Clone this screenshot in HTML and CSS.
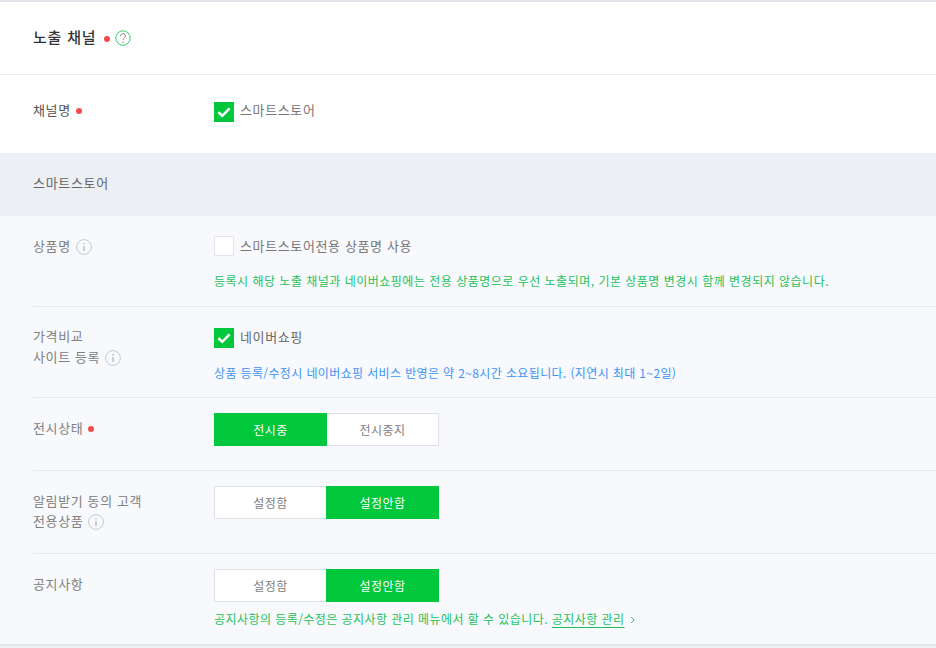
FILE: index.html
```html
<!DOCTYPE html>
<html lang="ko">
<head>
<meta charset="utf-8">
<title>노출 채널</title>
<link rel="stylesheet" href="styles.css">
</head>
<body>
<section class="panel">
  <header class="panel-head">
    <h2 class="panel-title">노출 채널</h2>
    <span class="dot dot-title"></span>
    <svg class="help" viewBox="0 0 16 16" width="16" height="16"><circle cx="8" cy="8" r="7.2" fill="none" stroke="#2fcf6c" stroke-width="1"/><path d="M5.6 6a2.4 2.4 0 1 1 3.7 2c-.9.6-1.3 1.1-1.3 2.2" fill="none" stroke="#888" stroke-width="1"/><circle cx="8" cy="12.2" r=".7" fill="#888"/></svg>
  </header>
  <div class="channel-row">
    <div class="label label-strong">채널명<span class="dot dot-label"></span></div>
    <label class="check">
      <span class="box on"><svg viewBox="0 0 20 20" width="20" height="20"><path d="M4.4 10.2l3.9 3.6L15.6 6.4" fill="none" stroke="#fff" stroke-width="2.6"/></svg></span>
      <span class="check-text">스마트스토어</span>
    </label>
  </div>
  <div class="band">스마트스토어</div>
  <div class="rows">
    <div class="row row-name">
      <div class="label">상품명<svg class="info" viewBox="0 0 16 16" width="16" height="16"><circle cx="8" cy="8" r="7.4" fill="none" stroke="#c3c8d2"/><path d="M8 7v5M8 4v1.4" stroke="#9aa0ab" fill="none"/></svg></div>
      <div class="field">
        <label class="check">
          <span class="box"></span>
          <span class="check-text">스마트스토어전용 상품명 사용</span>
        </label>
        <p class="note note-green note-name">등록시 해당 노출 채널과 네이버쇼핑에는 전용 상품명으로 우선 노출되며, 기본 상품명 변경시 함께 변경되지 않습니다.</p>
      </div>
    </div>
    <div class="row row-price">
      <div class="label">가격비교<br>사이트 등록<svg class="info" viewBox="0 0 16 16" width="16" height="16"><circle cx="8" cy="8" r="7.4" fill="none" stroke="#c3c8d2"/><path d="M8 7v5M8 4v1.4" stroke="#9aa0ab" fill="none"/></svg></div>
      <div class="field">
        <label class="check">
          <span class="box on"><svg viewBox="0 0 20 20" width="20" height="20"><path d="M4.4 10.2l3.9 3.6L15.6 6.4" fill="none" stroke="#fff" stroke-width="2.6"/></svg></span>
          <span class="check-text check-dark">네이버쇼핑</span>
        </label>
        <p class="note note-blue note-price">상품 등록/수정시 네이버쇼핑 서비스 반영은 약 2~8시간 소요됩니다. (지연시 최대 1~2일)</p>
      </div>
    </div>
    <div class="row row-display">
      <div class="label label-center">전시상태<span class="dot dot-label"></span></div>
      <div class="field">
        <div class="toggle">
          <span class="seg active">전시중</span>
          <span class="seg">전시중지</span>
        </div>
      </div>
    </div>
    <div class="row row-alert">
      <div class="label">알림받기 동의 고객<br>전용상품<svg class="info" viewBox="0 0 16 16" width="16" height="16"><circle cx="8" cy="8" r="7.4" fill="none" stroke="#c3c8d2"/><path d="M8 7v5M8 4v1.4" stroke="#9aa0ab" fill="none"/></svg></div>
      <div class="field">
        <div class="toggle">
          <span class="seg">설정함</span>
          <span class="seg active">설정안함</span>
        </div>
      </div>
    </div>
    <div class="row row-notice">
      <div class="label label-center">공지사항</div>
      <div class="field">
        <div class="toggle">
          <span class="seg">설정함</span>
          <span class="seg active">설정안함</span>
        </div>
        <p class="note note-green note-notice">공지사항의 등록/수정은 공지사항 관리 메뉴에서 할 수 있습니다. <a class="note-link">공지사항 관리</a><svg class="chev" viewBox="0 0 6 8" width="6" height="8"><path d="M1.2 1l3 3-3 3" fill="none" stroke="#22b85c" stroke-width="1"/></svg></p>
      </div>
    </div>
  </div>
</section>
</body>
</html>
```
FILE: styles.css
```css
* { box-sizing: border-box; }
html, body { margin: 0; padding: 0; height: 648px; overflow: hidden; }
body {
  background: #f2f3f6;
  font-family: "Noto Sans CJK KR", "Noto Sans", sans-serif;
  font-size: 13px;
  color: #666;
}
.panel { border-top: 2px solid #e3e5ea; }
.panel-head {
  height: 73px;
  padding: 0 33px 2px;
  display: flex;
  align-items: center;
  background: #fff;
  border-bottom: 1px solid #e9ebf0;
}
.panel-title { margin: 0; font-size: 15px; line-height: 20px; font-weight: 500; color: #333; letter-spacing: 0.8px; }
.dot { display: inline-block; width: 6px; height: 6px; border-radius: 50%; background: #f8494f; }
.dot-title { margin-left: 8px; margin-top: 3px; }
.dot-label { margin-left: 5px; vertical-align: 1px; }
.help { margin-left: 5px; margin-top: 2px; }
.channel-row {
  height: 78px;
  padding: 25px 33px 0;
  display: flex;
  background: #fff;
}
.label { width: 181px; flex: none; line-height: 20px; color: #808080; letter-spacing: 0.62px; font-size: 13px; }
.label-strong { color: #555; }
.info { margin-left: 5px; vertical-align: -4px; }
.check { display: flex; align-items: flex-start; }
.box {
  width: 20px; height: 20px; flex: none;
  background: #fff;
  border: 1px solid #e3e5ea;
  display: block;
}
.box.on { background: #00c73c; border: 0; }
.box svg { display: block; }
.channel-row .check { margin-top: 2px; }
.check-text { margin-left: 6px; line-height: 19px; color: #777; letter-spacing: 0.62px; }
.channel-row .check-text { margin-top: -2px; }
.check-dark { color: #666; margin-top: -1px; }
.band {
  height: 63px;
  padding: 20px 33px 0;
  line-height: 20px;
  background: #eceff3;
  color: #666;
  letter-spacing: 0.68px;
}
.rows { background: #f7f9fd; padding: 0 0 0 33px; border-bottom: 2px solid #e3e5ea; }
.row { display: flex; border-bottom: 1px solid #e6e8ed; }
.row:last-child { border-bottom: 0; }
.row-name { height: 91px; padding-top: 20px; }
.row-price { height: 91px; padding-top: 21px; }
.row-display { height: 73px; padding-top: 15px; }
.row-alert { height: 83px; padding-top: 15px; }
.row-notice { height: 90px; padding-top: 15px; }
.label-center { padding-top: 5px; }
.row-alert .label { padding-top: 5px; }
.row-price .label { margin-top: -3px; line-height: 21px; }
.note { margin: 0; font-size: 12px; line-height: 18px; white-space: nowrap; }
.note-green { color: #1fc15a; }
.note-blue { color: #3d94f6; }
.note-name { margin-top: 16px; letter-spacing: 0.49px; }
.note-price { margin-top: 16px; letter-spacing: 0.37px; }
.note-notice { margin-top: 8px; letter-spacing: 0.44px; }
.note-link { text-decoration: underline; text-underline-offset: 3px; }
.chev { margin-left: 5px; }
.toggle { display: flex; width: 225px; }
.seg {
  width: 113px;
  height: 33px;
  line-height: 31px;
  text-align: center;
  background: #fff;
  border: 1px solid #dfe1e7;
  color: #808080;
  font-size: 12px;
  letter-spacing: 0.5px;
}
.seg + .seg { margin-left: -1px; }
.seg.active { background: #00c73c; border-color: #00c73c; color: #fff; position: relative; }
```
